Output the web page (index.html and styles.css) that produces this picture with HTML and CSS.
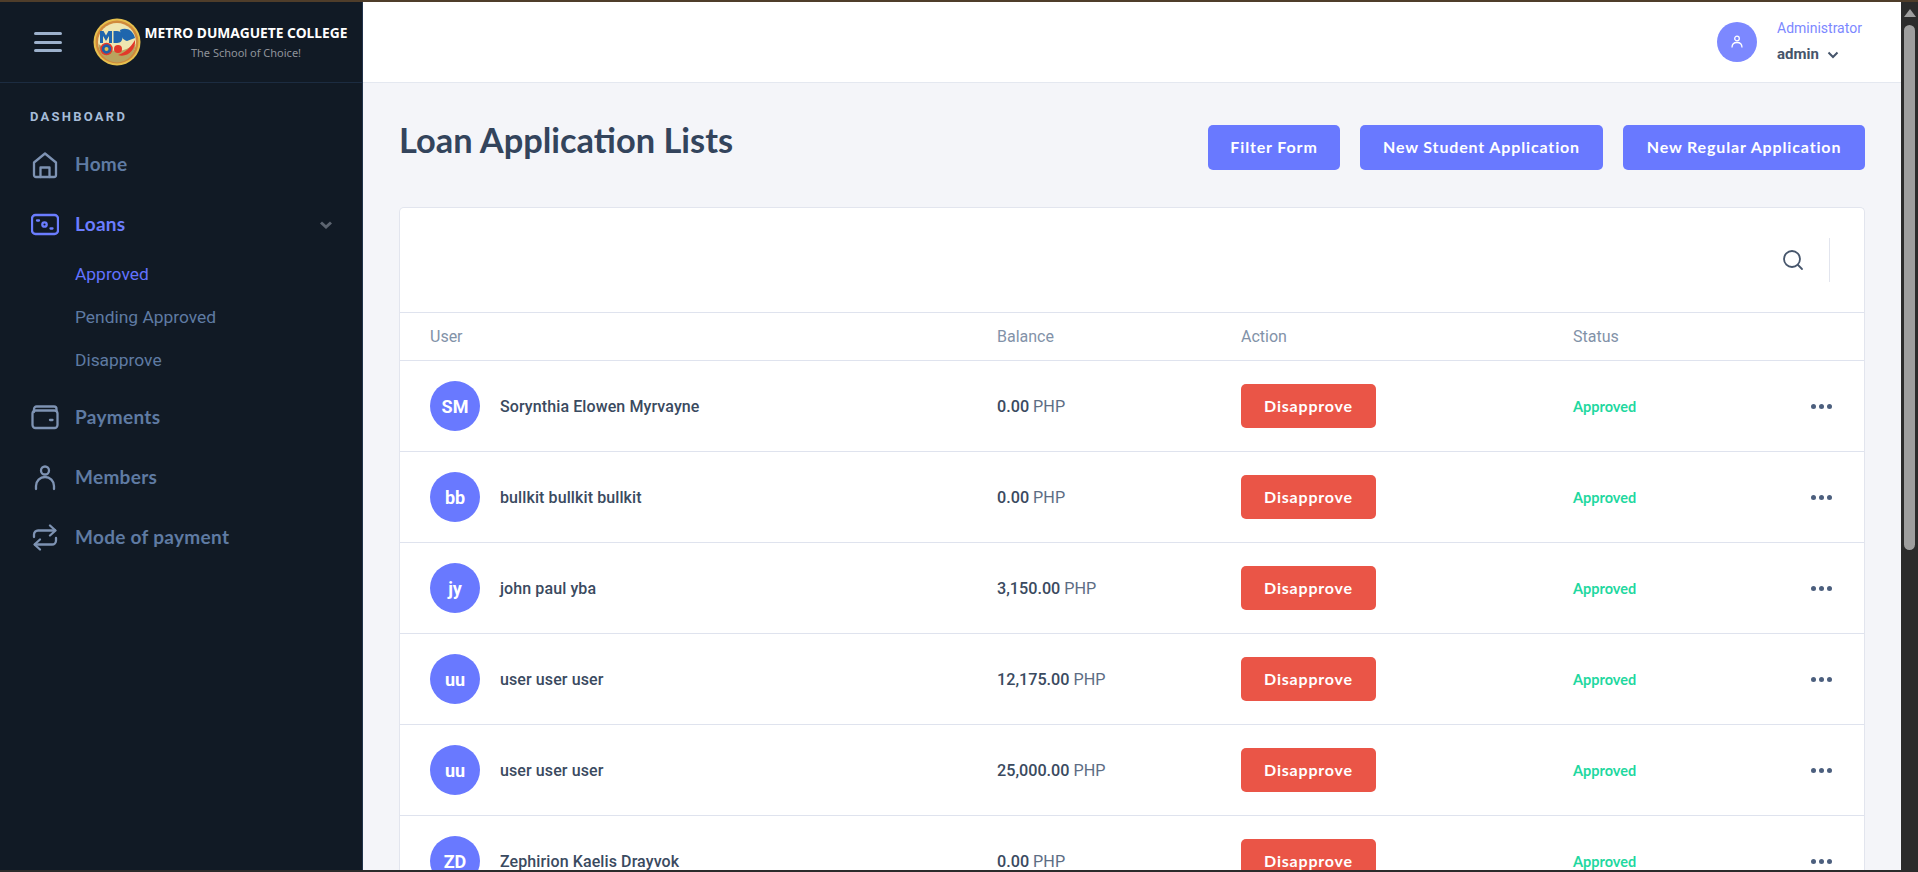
FILE: index.html
```html
<!DOCTYPE html>
<html lang="en">
<head>
    <meta charset="UTF-8">
    <title>Loan Application Lists</title>
    <link rel="stylesheet" href="styles.css">
</head>
<body>
    <div class="top-strip"></div>
    <div class="window">
        <aside class="sidebar">
            <div class="brand">
                <button class="burger" aria-label="Menu"><span></span><span></span><span></span></button>
                <svg class="logo" viewBox="0 0 48 48">
                    <circle cx="24" cy="24" r="23.500" fill="#e6c04e"/>
                    <circle cx="24" cy="24" r="21.500" fill="#d08a3c"/>
                    <circle cx="24" cy="24" r="19" fill="#efe6b0"/>
                    <path d="M5.500 26a18.500 18.500 0 0 0 37 0c-6 4-12 7-18 7-7 0-13-3-19-7z" fill="#b9a35e"/>
                    <path d="M27 12c6-3 13 0 15 8l-8 3c-4-1-6-4-7-11z" fill="#1f66ad"/>
                    <path d="M42 22c1 10-8 18-17 15 7-2 13-8 17-15z" fill="#e2382a"/>
                    <path d="M7 13h3.500l2.500 4.500 2.500-4.500H19v12h-3v-7l-3 5-3-5v7H7z" fill="#1f66ad"/>
                    <path d="M20.500 13H24c4 0 5.500 3 5.500 6s-1.500 6-5.500 6h-3.500z" fill="#1f66ad"/>
                    <circle cx="13.500" cy="31" r="5.500" fill="#1f5fa8" stroke="#e2382a" stroke-width="1.500"/>
                    <circle cx="13.500" cy="31" r="2" fill="#e6c04e"/>
                    <circle cx="25" cy="31" r="4" fill="#e2382a"/>
                </svg>
                <div class="school">
                    <div class="school-name">METRO DUMAGUETE COLLEGE</div>
                    <div class="school-tag">The School of Choice!</div>
                </div>
            </div>

            <div class="nav-title">DASHBOARD</div>
            <nav class="nav">
                <a class="nav-item">
                    <svg class="nav-icon" viewBox="0 0 28 28"><path d="M3 11.500 14 2.500l11 9V24a2 2 0 0 1-2 2H5a2 2 0 0 1-2-2z"/><path d="M9.500 26V16.500h9V26"/></svg>
                    <span>Home</span>
                </a>
                <a class="nav-item is-open">
                    <svg class="nav-icon" viewBox="0 0 28 28"><rect x="1" y="4" width="26" height="19" rx="3.500"/><circle cx="13.500" cy="13.500" r="2.200"/><path d="M6 9.500h2M19.500 17.500h2"/></svg>
                    <span>Loans</span>
                    <svg class="nav-caret" viewBox="0 0 14 10"><path d="M2 2.500 7 7l5-4.500"/></svg>
                </a>
                <div class="subnav">
                    <a class="sub-item is-active">Approved</a>
                    <a class="sub-item">Pending Approved</a>
                    <a class="sub-item">Disapprove</a>
                </div>
                <a class="nav-item">
                    <svg class="nav-icon" viewBox="0 0 28 28"><path d="M3 8V5a2.500 2.500 0 0 1 2.500-2.500H23A2.500 2.500 0 0 1 25.500 5v2"/><rect x="1.500" y="6.500" width="25" height="17.500" rx="3"/><path d="M19 16h2.500"/></svg>
                    <span>Payments</span>
                </a>
                <a class="nav-item">
                    <svg class="nav-icon" viewBox="0 0 28 28"><circle cx="14" cy="6.500" r="4"/><path d="M5 25v-3a9 9 0 0 1 18 0v3"/></svg>
                    <span>Members</span>
                </a>
                <a class="nav-item">
                    <svg class="nav-icon" viewBox="0 0 28 28"><path d="m19 1.500 5.500 5-5.500 5"/><path d="M3 13v-2.500a4 4 0 0 1 4-4h17"/><path d="m9 25.500-5.500-5 5.500-5"/><path d="M25 14v2.500a4 4 0 0 1-4 4H4"/></svg>
                    <span>Mode of payment</span>
                </a>
            </nav>
        </aside>

        <div class="content">
            <header class="topbar">
                <div class="avatar-small">
                    <svg viewBox="0 0 16 16"><circle cx="8" cy="4.500" r="2.300"/><path d="M3 13.500c0-3 2-5 5-5s5 2 5 5"/></svg>
                </div>
                <div class="account">
                    <div class="role">Administrator</div>
                    <div class="account-name">admin
                        <svg viewBox="0 0 12 8"><path d="M1.500 1.500 6 6l4.500-4.500"/></svg>
                    </div>
                </div>
            </header>

            <main class="main">
                <div class="page-head">
                    <h1>Loan Application Lists</h1>
                    <div class="page-actions">
                        <button class="btn btn-filter">Filter Form</button>
                        <button class="btn btn-student">New Student Application</button>
                        <button class="btn btn-regular">New Regular Application</button>
                    </div>
                </div>

                <section class="card">
                    <div class="toolbar">
                        <svg class="search" viewBox="0 0 22 22"><circle cx="10" cy="10" r="8"/><path d="m16 16 4 4"/></svg>
                        <div class="toolbar-line"></div>
                    </div>
                    <div class="row row-head">
                        <div>User</div>
                        <div>Balance</div>
                        <div>Action</div>
                        <div>Status</div>
                    </div>

                    <div class="row">
                        <div class="user"><span class="avatar">SM</span>Sorynthia Elowen Myrvayne</div>
                        <div class="balance"><b>0.00</b> PHP</div>
                        <div><button class="btn-red">Disapprove</button></div>
                        <div class="status">Approved</div>
                        <div class="dots"><i></i><i></i><i></i></div>
                    </div>
                    <div class="row">
                        <div class="user"><span class="avatar">bb</span>bullkit bullkit bullkit</div>
                        <div class="balance"><b>0.00</b> PHP</div>
                        <div><button class="btn-red">Disapprove</button></div>
                        <div class="status">Approved</div>
                        <div class="dots"><i></i><i></i><i></i></div>
                    </div>
                    <div class="row">
                        <div class="user"><span class="avatar">jy</span>john paul yba</div>
                        <div class="balance"><b>3,150.00</b> PHP</div>
                        <div><button class="btn-red">Disapprove</button></div>
                        <div class="status">Approved</div>
                        <div class="dots"><i></i><i></i><i></i></div>
                    </div>
                    <div class="row">
                        <div class="user"><span class="avatar">uu</span>user user user</div>
                        <div class="balance"><b>12,175.00</b> PHP</div>
                        <div><button class="btn-red">Disapprove</button></div>
                        <div class="status">Approved</div>
                        <div class="dots"><i></i><i></i><i></i></div>
                    </div>
                    <div class="row">
                        <div class="user"><span class="avatar">uu</span>user user user</div>
                        <div class="balance"><b>25,000.00</b> PHP</div>
                        <div><button class="btn-red">Disapprove</button></div>
                        <div class="status">Approved</div>
                        <div class="dots"><i></i><i></i><i></i></div>
                    </div>
                    <div class="row">
                        <div class="user"><span class="avatar">ZD</span>Zephirion Kaelis Drayvok</div>
                        <div class="balance"><b>0.00</b> PHP</div>
                        <div><button class="btn-red">Disapprove</button></div>
                        <div class="status">Approved</div>
                        <div class="dots"><i></i><i></i><i></i></div>
                    </div>
                </section>
            </main>
        </div>

        <div class="scrollbar">
            <div class="scroll-arrow"></div>
            <div class="scroll-thumb"></div>
        </div>
    </div>
    <div class="bottom-strip"></div>
</body>
</html>
```

FILE: styles.css
```css
* {
    box-sizing: border-box;
}

html, body {
    margin: 0;
    height: 100%;
    overflow: hidden;
}

body {
    display: flex;
    flex-direction: column;
    font-family: Roboto, Arial, sans-serif;
    color: #3a4a60;
    background: #f4f5f9;
}

.top-strip {
    height: 2px;
    background: #4f3d2a;
}

.bottom-strip {
    height: 2px;
    background: #2b2b2b;
}

.window {
    flex: 1;
    display: flex;
    min-height: 0;
}

/* sidebar */
.sidebar {
    width: 363px;
    flex: none;
    background: #111a25;
    border-right: 1px solid #22344c;
}

.brand {
    height: 81px;
    display: flex;
    align-items: center;
    border-bottom: 1px solid #1c2c41;
}

.burger {
    margin-left: 34px;
    width: 28px;
    height: 20px;
    padding: 0;
    background: none;
    border: 0;
    display: flex;
    flex-direction: column;
    justify-content: space-between;
}

.burger span {
    display: block;
    height: 3px;
    border-radius: 2px;
    background: #9db1cc;
}

.logo {
    width: 48px;
    height: 48px;
    margin-left: 31px;
    flex: none;
}

.school {
    margin-left: 2px;
    width: 206px;
    text-align: center;
    white-space: nowrap;
}

.school-name {
    font-family: "Noto Sans", sans-serif;
    font-weight: 700;
    font-size: 13.800px;
    line-height: 18px;
    color: #fff;
}

.school-tag {
    font-family: "Noto Sans", sans-serif;
    font-size: 11px;
    line-height: 14px;
    margin-top: 4px;
    color: #8f939a;
}

.nav-title {
    margin: 26px 0 0 30px;
    font-weight: 700;
    font-size: 13px;
    line-height: 16px;
    letter-spacing: 2.250px;
    color: #a6bcd8;
}

.nav {
    margin-top: 8px;
}

.nav-item {
    height: 60px;
    display: flex;
    align-items: center;
    padding-left: 31px;
    font-family: Lato, "Noto Sans", sans-serif;
    font-weight: 700;
    font-size: 19px;
    letter-spacing: 0.300px;
    color: #5f7ba3;
    position: relative;
}

.nav-item.is-open {
    color: #6b7dff;
}

.nav-icon {
    width: 28px;
    height: 28px;
    margin: 4px 16px 0 0;
    flex: none;
    fill: none;
    stroke: #7e93b3;
    stroke-width: 2.300;
    stroke-linecap: round;
    stroke-linejoin: round;
}

.is-open .nav-icon {
    stroke: #6b7dff;
}

.nav-caret {
    position: absolute;
    right: 29px;
    top: 27px;
    width: 14px;
    height: 10px;
    fill: none;
    stroke: #5c6470;
    stroke-width: 3;
}

.subnav {
    padding-bottom: 4px;
}

.sub-item {
    display: block;
    height: 43px;
    line-height: 43px;
    padding-left: 75px;
    font-size: 17.400px;
    color: #5f7ba3;
}

.sub-item.is-active {
    color: #6172ff;
}

/* right side */
.content {
    flex: 1;
    min-width: 0;
    display: flex;
    flex-direction: column;
}

.topbar {
    height: 81px;
    flex: none;
    background: #fff;
    border-bottom: 1px solid #e4e8f0;
    display: flex;
    align-items: center;
    padding-left: 1354px;
}

.avatar-small {
    width: 40px;
    height: 40px;
    border-radius: 50%;
    background: #7c88ff;
    display: flex;
    align-items: center;
    justify-content: center;
}

.avatar-small svg {
    width: 16px;
    height: 16px;
    fill: none;
    stroke: #fff;
    stroke-width: 1.300;
}

.account {
    margin: -3px 0 0 20px;
}

.role {
    font-size: 14px;
    line-height: 20px;
    color: #7c88ff;
}

.account-name {
    margin-top: 6px;
    font-weight: 700;
    font-size: 15px;
    line-height: 20px;
    color: #46556b;
    display: flex;
    align-items: center;
    gap: 8px;
}

.account-name svg {
    width: 12px;
    height: 8px;
    margin-top: 3px;
    fill: none;
    stroke: #46556b;
    stroke-width: 2;
}

.main {
    flex: 1;
    min-height: 0;
    padding: 42px 36px 0;
}

.page-head {
    height: 82px;
    display: flex;
    justify-content: space-between;
    align-items: flex-start;
}

h1 {
    margin: 0;
    font-family: Lato, "Noto Sans", sans-serif;
    font-weight: 700;
    font-size: 34.400px;
    line-height: 30px;
    color: #33445c;
}

.page-actions {
    display: flex;
    gap: 20px;
}

.btn {
    height: 45px;
    padding: 0 0 2px;
    border: 0;
    border-radius: 5px;
    background: #6979ff;
    color: #fff;
    font-family: Lato, "Noto Sans", sans-serif;
    font-weight: 700;
    font-size: 16px;
    letter-spacing: 0.850px;
}

.btn-filter {
    width: 132px;
}

.btn-student {
    width: 243px;
}

.btn-regular {
    width: 242px;
}

.card {
    background: #fff;
    border: 1px solid #e2e5ee;
    border-bottom: 0;
    border-radius: 5px 5px 0 0;
}

.toolbar {
    height: 104px;
    display: flex;
    align-items: center;
    justify-content: flex-end;
    padding-right: 34px;
}

.search {
    width: 22px;
    height: 22px;
    fill: none;
    stroke: #46556b;
    stroke-width: 1.800;
    stroke-linecap: round;
    margin-right: 25px;
}

.toolbar-line {
    width: 1px;
    height: 44px;
    background: #e2e5ee;
}

.row {
    display: grid;
    grid-template-columns: 567px 244px 332px 1fr 30px;
    align-items: center;
    height: 91px;
    padding: 0 32px 0 30px;
    border-top: 1px solid #dfe3ee;
}

.row-head {
    height: 48px;
    font-size: 16px;
    color: #8292a8;
}

.user {
    display: flex;
    align-items: center;
    font-weight: 500;
    font-size: 16px;
    letter-spacing: 0.100px;
    color: #3a4a60;
}

.avatar {
    width: 50px;
    height: 50px;
    border-radius: 50%;
    background: #6979ff;
    color: #fff;
    font-weight: 700;
    font-size: 18px;
    letter-spacing: 0;
    display: flex;
    align-items: center;
    justify-content: center;
    margin-right: 20px;
}

.balance {
    font-size: 16.200px;
    color: #5d6d84;
}

.balance b {
    font-weight: 500;
    color: #3a4a60;
}

.btn-red {
    width: 135px;
    height: 44px;
    padding: 0 0 1px;
    border: 0;
    border-radius: 5px;
    background: #ea5547;
    color: #fff;
    font-family: Lato, "Noto Sans", sans-serif;
    font-weight: 700;
    font-size: 16px;
    letter-spacing: 0.800px;
}

.status {
    font-family: Lato, "Noto Sans", sans-serif;
    font-weight: 700;
    font-size: 14.500px;
    color: #1fd8a0;
}

.dots {
    display: flex;
    justify-content: flex-end;
    gap: 3px;
}

.dots i {
    width: 5px;
    height: 5px;
    border-radius: 50%;
    background: #4c5f7e;
}

/* browser scrollbar from the screenshot */
.scrollbar {
    width: 17px;
    flex: none;
    background: #2b2b2b;
    padding: 0 3px;
}

.scroll-arrow {
    margin: 7px auto 0;
    width: 0;
    height: 0;
    border-left: 6px solid transparent;
    border-right: 6px solid transparent;
    border-bottom: 8px solid #9e9e9e;
}

.scroll-thumb {
    margin-top: 8px;
    height: 525px;
    border-radius: 6px;
    background: #9e9e9e;
}
```
